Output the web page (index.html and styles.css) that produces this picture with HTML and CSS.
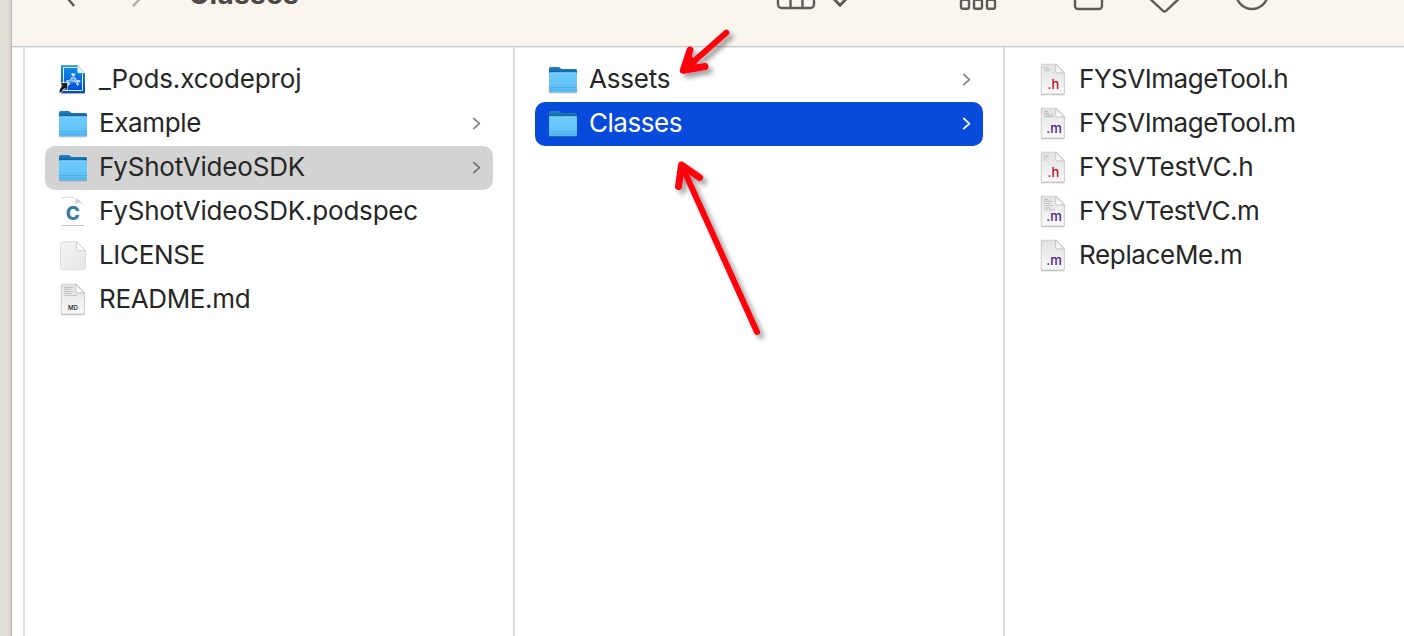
FILE: index.html
```html
<!DOCTYPE html>
<html lang="en">
<head>
<meta charset="utf-8">
<title>Classes</title>
<link rel="stylesheet" href="styles.css">
</head>
<body>
<svg class="defs" width="0" height="0" aria-hidden="true">
  <defs>
    <linearGradient id="front" x1="0" y1="0" x2="0" y2="1"><stop offset="0" stop-color="#70cbfc"/><stop offset=".75" stop-color="#62c2f7"/><stop offset="1" stop-color="#5ab8ef"/></linearGradient>
    <linearGradient id="back" x1="0" y1="0" x2="0" y2="1"><stop offset="0" stop-color="#2487c5"/><stop offset=".35" stop-color="#1669a8"/></linearGradient>
    <linearGradient id="paper" x1="0" y1="0" x2="0" y2="1"><stop offset="0" stop-color="#e1e1e1"/><stop offset="1" stop-color="#fafafa"/></linearGradient>
    <linearGradient id="plain" x1="0" y1="0" x2="1" y2="1"><stop offset="0" stop-color="#f4f4f4"/><stop offset="1" stop-color="#e5e5e5"/></linearGradient>
    <linearGradient id="blue" x1="0" y1="0" x2="0" y2="1"><stop offset="0" stop-color="#1592e4"/><stop offset="1" stop-color="#0048d8"/></linearGradient>
    <linearGradient id="curl" x1="0" y1="1" x2="1" y2="0"><stop offset="0" stop-color="#fff"/><stop offset=".5" stop-color="#f2f2f2"/><stop offset="1" stop-color="#ccc"/></linearGradient>
    <filter id="soft" x="-20%" y="-20%" width="150%" height="150%"><feDropShadow dx="0" dy=".7" stdDeviation=".6" flood-color="#000" flood-opacity=".45"/></filter>
    <filter id="cast" filterUnits="userSpaceOnUse" x="0" y="0" width="130" height="330"><feDropShadow dx="4" dy="4" stdDeviation="2.4" flood-color="#000" flood-opacity=".38"/></filter>
    <symbol id="folder" viewBox="0 0 44 44">
      <g filter="url(#soft)">
      <path d="M14 10.600a1.700 1.700 0 0 1 1.700-1.700h7c1.200 0 1.700.4 2.500 1 .8.700 1.400 1 2.600 1h12.600A1.700 1.700 0 0 1 42 12.600V22H14z" fill="url(#back)"/>
      <path d="M14 15.900c0-1 .5-1.400 1.400-1.400h25.200c.9 0 1.400.4 1.400 1.400v16.800c0 1-.5 1.500-1.500 1.500h-25c-1 0-1.500-.5-1.500-1.500z" fill="url(#front)"/>
      </g>
      <path d="M14.600 14.900h26.800" stroke="#9be0ff" stroke-width=".7"/>
      <path d="M14 29.500h28M14 32h28" stroke="#329cd8" stroke-width=".7" opacity=".6"/>
    </symbol>
    <symbol id="sheet" viewBox="0 0 44 44">
      <path d="M17 6.200h14.500l7.800 8.300V35.200a.7.700 0 0 1-.7.700H17a.7.700 0 0 1-.7-.7V6.900a.7.700 0 0 1 .7-.7z" fill="url(#paper)" stroke="#bcbcbc" stroke-width=".5" filter="url(#soft)"/>
      <path d="M30.800 6.200v7.500c0 .8.400 1.200 1.200 1.200h7.300z" fill="url(#curl)" stroke="#aaa" stroke-width=".6"/>
    </symbol>
    <symbol id="chevron" viewBox="0 0 12 16"><path d="M2.800 2.500 8.400 7.600l-5.600 5.100" fill="none" stroke="currentColor" stroke-width="1.700" stroke-linecap="round" stroke-linejoin="round"/></symbol>
  </defs>
</svg>
<div class="desktop">
<main class="window">
  <header class="toolbar">
    <svg class="tool back" width="20" height="20"><path d="M2-7 12.500 5.300" stroke="#5b5754"/></svg>
    <svg class="tool forward" width="20" height="20"><path d="M14-5 3.500 5.300" stroke="#b3afab"/></svg>
    <h1 class="title">Classes</h1>
    <svg class="tool columns" width="42" height="20"><rect x="2" y="-20" width="36" height="28" rx="3.500"/><path d="M14.500-19V8M26.500-19V8"/></svg>
    <svg class="tool sort" width="20" height="20"><path d="m3.500-1.500 6.500 6.800 6.500-6.800"/></svg>
    <svg class="tool group" width="40" height="20"><rect x="2" y="-.2" width="8" height="9" rx="1.800"/><rect x="15" y="-.2" width="8" height="9" rx="1.800"/><rect x="28" y="-.2" width="8" height="9" rx="1.800"/></svg>
    <svg class="tool share" width="32" height="20"><rect x="2" y="-20" width="27" height="29" rx="3"/></svg>
    <svg class="tool tag" width="44" height="20"><path d="m3-5 17 15.800q1.500 1.300 3 0L40-5"/></svg>
    <svg class="tool more" width="36" height="20"><circle cx="18" cy="-6.800" r="15.800"/></svg>
  </header>
  <div class="browser">
    <section class="column">
      <div class="row">
        <svg class="icon" viewBox="0 0 44 44">
          <path d="M16 7.300h17l7 8.200V34a1 1 0 0 1-1 1H17a1 1 0 0 1-1-1z" fill="url(#blue)" filter="url(#soft)"/>
          <path d="M32 9.400H18.500v23.100h19V16" fill="none" stroke="#fff" stroke-width=".9"/>
          <path d="M32.500 7.300v6.600q0 1.200 1.200 1.200H40z" fill="#e6f1fb" stroke="#bdd7ee" stroke-width=".4"/>
          <path d="m27.300 16.200 5.500 10.300M29.300 16.300l-5.700 10M22.300 23.300h7.600M31.800 23.300h2.600" fill="none" stroke="#dcecff" stroke-width="2.100" stroke-linecap="round"/>
          <path d="m27.700 17.500 4.600 8.200M28.700 18l-4.600 7.800M22.800 23.300h6.500" fill="none" stroke="#247ee0" stroke-width=".8"/>
          <path d="m15.500 25.200 6.600-.3-.2 7-2.200-2q-2.300 1.500-3.300 4.500h-2.100q.5-4 3.200-6.800z" fill="#1c1c1c" stroke="#fff" stroke-width="1.200" paint-order="stroke"/>
        </svg>
        <span class="name loose">_Pods.xcodeproj</span>
      </div>
      <div class="row"><svg class="icon"><use href="#folder"/></svg><span class="name snug">Example</span><svg class="chevron"><use href="#chevron"/></svg></div>
      <div class="row trail"><svg class="icon"><use href="#folder"/></svg><span class="name">FyShotVideoSDK</span><svg class="chevron"><use href="#chevron"/></svg></div>
      <div class="row">
        <svg class="icon" viewBox="0 0 44 44">
          <path d="M17 7.500q7-1.800 12.500 0l-1.500 1q-4-1.500-11 .5z" fill="#ddd"/>
          <path d="M29 7.800c2 1 1.500 4 .8 6.200 3.500-1.800 6-.8 8.500.7-2-3-5-6-9.300-6.900z" fill="#d3d3d3"/>
          <path d="M17 35.500h22" stroke="#b3b3b3" stroke-width=".8"/>
          <text class="glyph c-mark" x="20.800" y="29.500">C</text>
        </svg>
        <span class="name">FyShotVideoSDK.podspec</span>
      </div>
      <div class="row">
        <svg class="icon" viewBox="0 0 44 44">
          <path d="M18 7.700h13.500l9 9v17a2 2 0 0 1-2 2H17.500a2 2 0 0 1-2-2v-23.500a2.500 2.500 0 0 1 2.500-2.500z" fill="url(#plain)" stroke="#d5d5d5" stroke-width=".8"/>
          <path d="M31.700 7.700v7.800q0 1.200 1.200 1.200h7.600z" fill="#fff" stroke="#bbb" stroke-width=".7"/>
        </svg>
        <span class="name snug">LICENSE</span>
      </div>
      <div class="row">
        <svg class="icon" viewBox="0 0 44 44"><use href="#sheet" width="44" height="44"/><path d="M19 9.500h9M19 11.300h7M19 13.500h9M19 15.500h8M19 17.500h13" stroke="#b5b5b5" stroke-width=".7"/><text class="glyph md-mark" x="23" y="32.200">MD</text></svg>
        <span class="name snug">README.md</span>
      </div>
    </section>
    <section class="column">
      <div class="row"><svg class="icon"><use href="#folder"/></svg><span class="name">Assets</span><svg class="chevron"><use href="#chevron"/></svg></div>
      <div class="row selected"><svg class="icon"><use href="#folder"/></svg><span class="name tight">Classes</span><svg class="chevron"><use href="#chevron"/></svg></div>
    </section>
    <section class="column last">
      <div class="row"><svg class="icon" viewBox="0 0 44 44"><use href="#sheet" width="44" height="44"/><path d="M19 9.500h4M19 11.300h7M19 13h5" stroke="#b9b9b9" stroke-width=".7"/><text class="glyph h-mark" x="22.500" y="31">.h</text></svg><span class="name tight">FYSVImageTool.h</span></div>
      <div class="row"><svg class="icon" viewBox="0 0 44 44"><use href="#sheet" width="44" height="44"/><path d="M19 9.500h4M19 11.300h5M19 13h9M20 14.700h9" stroke="#b0b0b0" stroke-width=".7"/><text class="glyph m-mark" x="21.300" y="31">.m</text></svg><span class="name tight">FYSVImageTool.m</span></div>
      <div class="row"><svg class="icon" viewBox="0 0 44 44"><use href="#sheet" width="44" height="44"/><path d="M19 9.500h4M19 11.300h5M19 14h3" stroke="#b9b9b9" stroke-width=".7"/><text class="glyph h-mark" x="22.500" y="31">.h</text></svg><span class="name snug">FYSVTestVC.h</span></div>
      <div class="row"><svg class="icon" viewBox="0 0 44 44"><use href="#sheet" width="44" height="44"/><path d="M19 9.500h4M19 11.300h8M19 13.500h6M20 15.500h8M19 18h7M20 20h10" stroke="#b0b0b0" stroke-width=".7"/><text class="glyph m-mark" x="21.300" y="31">.m</text></svg><span class="name tight">FYSVTestVC.m</span></div>
      <div class="row"><svg class="icon" viewBox="0 0 44 44"><use href="#sheet" width="44" height="44"/><text class="glyph m-mark" x="21.300" y="31">.m</text></svg><span class="name snug">ReplaceMe.m</span></div>
    </section>
  </div>
</main>
<svg class="arrows" width="130" height="330" viewBox="0 0 130 330">
  <g filter="url(#cast)" fill="none" stroke="#ff0008" stroke-width="6" stroke-linecap="round" stroke-linejoin="round">
    <path d="M66.300 12.800 24 50"/><path d="M30 30 23.300 50.300 45 46.500" stroke-width="7"/><path d="M24 50 31 35 37 44z" fill="#ff0008" stroke="none"/>
    <path d="M97 312 22 146"/><path d="M18.500 166.500 21.500 145 39.500 157.500" stroke-width="7"/>
  </g>
</svg>
</div>
</body>
</html>
```

FILE: styles.css
```css
* { box-sizing: border-box; }
body { margin: 0; font-family: Inter, "Liberation Sans", sans-serif; color: #262626; }
.defs { position: absolute; }
.desktop {
  position: relative;
  display: flex;
  width: 1404px;
  height: 636px;
  padding-left: 11px;
  overflow: hidden;
  background: linear-gradient(90deg, #e3ddd8 0 6px, #d8d2ce 11px);
}
.window { display: flex; flex-direction: column; flex: 1; min-width: 0; border-left: 1px solid #b9b5b2; background: #fff; }
.toolbar {
  display: flex;
  align-items: flex-start;
  height: 47px;
  flex: none;
  overflow: hidden;
  background: #fbf5f0;
  border-bottom: 1px solid #c9c8c7;
}
.tool { flex: none; fill: none; stroke: #5f5b57; stroke-width: 2.4; stroke-linecap: round; stroke-linejoin: round; }
.back { margin-left: 49px; }
.forward { margin-left: 49px; }
.title { width: 120px; margin: -22px 0 0 38.5px; font-size: 28px; line-height: 32px; font-weight: 700; letter-spacing: .3px; color: #4b4845; white-space: nowrap; }
.columns { margin-left: 467.5px; }
.sort { margin-left: 12px; stroke-width: 3; }
.group { margin-left: 109px; }
.share { margin-left: 74px; }
.tag { margin-left: 38px; }
.more { margin-left: 47px; }
.browser { display: flex; flex: 1; padding-left: 11px; box-shadow: inset 0 1px #eee; }
.column { flex: none; width: 490px; padding: 11px 20px; border-left: 2px solid #dcdcdc; }
.last { width: 401px; padding-right: 0; }
.row { display: flex; align-items: center; height: 44px; padding-right: 10px; border-radius: 10px; }
.trail { background: #d3d3d3; }
.selected { background: #084bdc; color: #fff; }
.icon { width: 44px; height: 44px; margin-right: 10px; flex: none; }
.name { flex: 1; height: 44px; font-size: 26px; line-height: 42px; white-space: nowrap; letter-spacing: -.2px; }
.loose { letter-spacing: -.12px; }
.snug { letter-spacing: -.35px; }
.tight { letter-spacing: -.46px; }
.chevron { width: 12px; height: 16px; color: #858585; flex: none; }
.trail .chevron { color: #747474; }
.selected .chevron { color: #fff; }
.glyph { font-family: Inter, sans-serif; }
.c-mark { font-size: 19px; font-weight: 800; fill: #397d9f; }
.md-mark { font-size: 6px; font-weight: 600; fill: #333; }
.h-mark { font-size: 13px; font-weight: 500; fill: #b30d20; }
.m-mark { font-size: 13px; font-weight: 500; fill: #4b178c; }
.arrows { position: absolute; left: 660px; top: 20px; }
```
